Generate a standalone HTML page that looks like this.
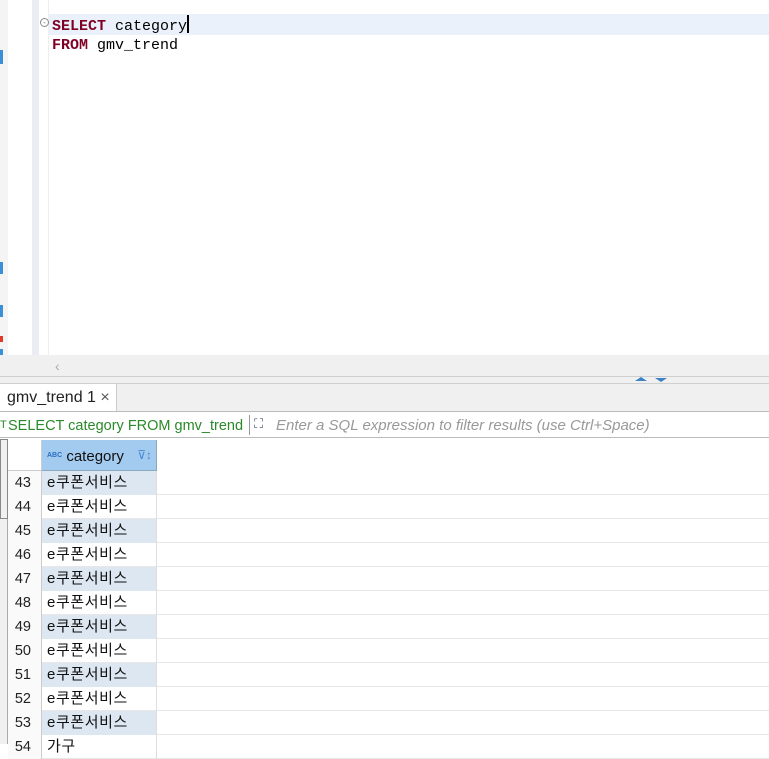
<!DOCTYPE html>
<html><head><meta charset="utf-8"><style>
*{margin:0;padding:0;box-sizing:border-box}
body{width:769px;height:744px;overflow:hidden;background:#fff;font-family:"Liberation Sans","Noto Sans CJK KR",sans-serif;position:relative}
.a{position:absolute}
.mono{font-family:"Liberation Mono","Noto Sans CJK KR",monospace;font-size:15px}
.row{position:absolute;left:8px;height:24px;width:761px;border-bottom:1px solid #e8e8e8}
.rn{position:absolute;left:0;width:34px;height:24px;text-align:right;padding-right:10px;font-size:14.5px;line-height:24px;color:#222;border-right:1px solid #ccc;background:#fafafa}
.cc{position:absolute;left:34px;width:115px;height:24px;font-size:15px;line-height:24px;padding-left:5px;color:#111;border-right:1px solid #ddd;letter-spacing:0.6px}
.odd .cc{background:#dce7f2}
</style></head><body>
<div class="a" style="left:0;top:0;width:8px;height:355px;background:#f4f4f4"></div>
<div class="a" style="left:0;top:50px;width:3px;height:14px;background:#3b8fd6"></div>
<div class="a" style="left:0;top:262px;width:3px;height:12px;background:#3b8fd6"></div>
<div class="a" style="left:0;top:305px;width:3px;height:12px;background:#3b8fd6"></div>
<div class="a" style="left:0;top:336px;width:3px;height:6px;background:#e03a2a"></div>
<div class="a" style="left:0;top:349px;width:3px;height:10px;background:#3b8fd6"></div>
<div class="a" style="left:32px;top:0;width:7px;height:355px;background:#ececf4"></div>
<div class="a" style="left:48px;top:0;width:1px;height:355px;background:#eee"></div>
<div class="a" style="left:49px;top:14px;width:720px;height:21px;background:#eaf1fa"></div>
<div class="a" style="left:40px;top:18px;width:9px;height:9px;border:1px solid #888;border-radius:50%;font-size:8px;line-height:7px;text-align:center;color:#666">-</div>
<div class="a mono" style="left:52px;top:15px;line-height:20px"><b style="color:#7f0024">SELECT</b> category<span style="display:inline-block;width:2px;height:18px;background:#000;vertical-align:-3px"></span></div>
<div class="a mono" style="left:52px;top:36px;line-height:20px"><b style="color:#7f0024">FROM</b> gmv_trend</div>
<div class="a" style="left:0;top:355px;width:769px;height:28px;background:#f0f0f0"></div>
<div class="a" style="left:55px;top:358px;color:#aaa;font-size:14px">‹</div>
<div class="a" style="left:0;top:376px;width:769px;height:1px;background:#cfcfcf"></div>
<div class="a" style="left:0;top:383px;width:769px;height:1px;background:#cfcfcf"></div>
<div class="a" style="left:635px;top:377px;width:0;height:0;border-left:6px solid transparent;border-right:6px solid transparent;border-bottom:4px solid #3a82c4"></div>
<div class="a" style="left:655px;top:378px;width:0;height:0;border-left:6px solid transparent;border-right:6px solid transparent;border-top:4px solid #3a82c4"></div>
<div class="a" style="left:0;top:384px;width:769px;height:28px;background:#f0f0f0"></div>
<div class="a" style="left:0;top:384px;width:117px;height:28px;background:#fff;border-right:1px solid #ccc;font-size:16px;line-height:27px;padding-left:7px;color:#222">gmv_trend 1 <span style="color:#555">×</span></div>
<div class="a" style="left:0;top:411px;width:769px;height:1px;background:#bbb"></div>
<div class="a" style="left:0;top:412px;width:769px;height:26px;background:#fff;border-bottom:1px solid #bbb"></div>
<div class="a" style="left:0;top:418px;font-size:11px;color:#2a8a2a;line-height:14px">T</div>
<div class="a" style="left:8px;top:416px;font-size:14.5px;color:#2a8a2a;line-height:20px">SELECT category FROM gmv_trend</div>
<div class="a" style="left:249px;top:415px;width:1px;height:20px;background:#999"></div>
<div class="a" style="left:254px;top:417px;font-size:13px;color:#557;line-height:14px">⛶</div>
<div class="a" style="left:276px;top:416px;font-size:15px;color:#999;font-style:italic;line-height:20px">Enter a SQL expression to filter results (use Ctrl+Space)</div>
<div class="a" style="left:0;top:439px;width:8px;height:305px;background:#f0f0f0;border-right:1px solid #aaa"></div>
<div class="a" style="left:0;top:439px;width:8px;height:80px;border:1px solid #888"></div>
<div class="a" style="left:8px;top:440px;width:34px;height:31px;background:#fff;border-right:1px solid #ccc;border-bottom:1px solid #ccc"></div>
<div class="a" style="left:42px;top:440px;width:115px;height:31px;background:#a3cbf0;border-right:1px solid #8ab;border-bottom:1px solid #8ab;font-size:15px;line-height:31px;padding-left:5px;color:#111"><span style="font-size:7px;color:#2a6fc0;font-weight:bold;vertical-align:4px">ABC</span> category<span style="position:absolute;right:4px;top:0;color:#4a8ad0;font-size:12px">⊽↕</span></div>
<div class="row odd" style="top:471px"><div class="rn">43</div><div class="cc">e쿠폰서비스</div></div>
<div class="row" style="top:495px"><div class="rn">44</div><div class="cc">e쿠폰서비스</div></div>
<div class="row odd" style="top:519px"><div class="rn">45</div><div class="cc">e쿠폰서비스</div></div>
<div class="row" style="top:543px"><div class="rn">46</div><div class="cc">e쿠폰서비스</div></div>
<div class="row odd" style="top:567px"><div class="rn">47</div><div class="cc">e쿠폰서비스</div></div>
<div class="row" style="top:591px"><div class="rn">48</div><div class="cc">e쿠폰서비스</div></div>
<div class="row odd" style="top:615px"><div class="rn">49</div><div class="cc">e쿠폰서비스</div></div>
<div class="row" style="top:639px"><div class="rn">50</div><div class="cc">e쿠폰서비스</div></div>
<div class="row odd" style="top:663px"><div class="rn">51</div><div class="cc">e쿠폰서비스</div></div>
<div class="row" style="top:687px"><div class="rn">52</div><div class="cc">e쿠폰서비스</div></div>
<div class="row odd" style="top:711px"><div class="rn">53</div><div class="cc">e쿠폰서비스</div></div>
<div class="row" style="top:735px"><div class="rn">54</div><div class="cc">가구</div></div>
</body></html>
